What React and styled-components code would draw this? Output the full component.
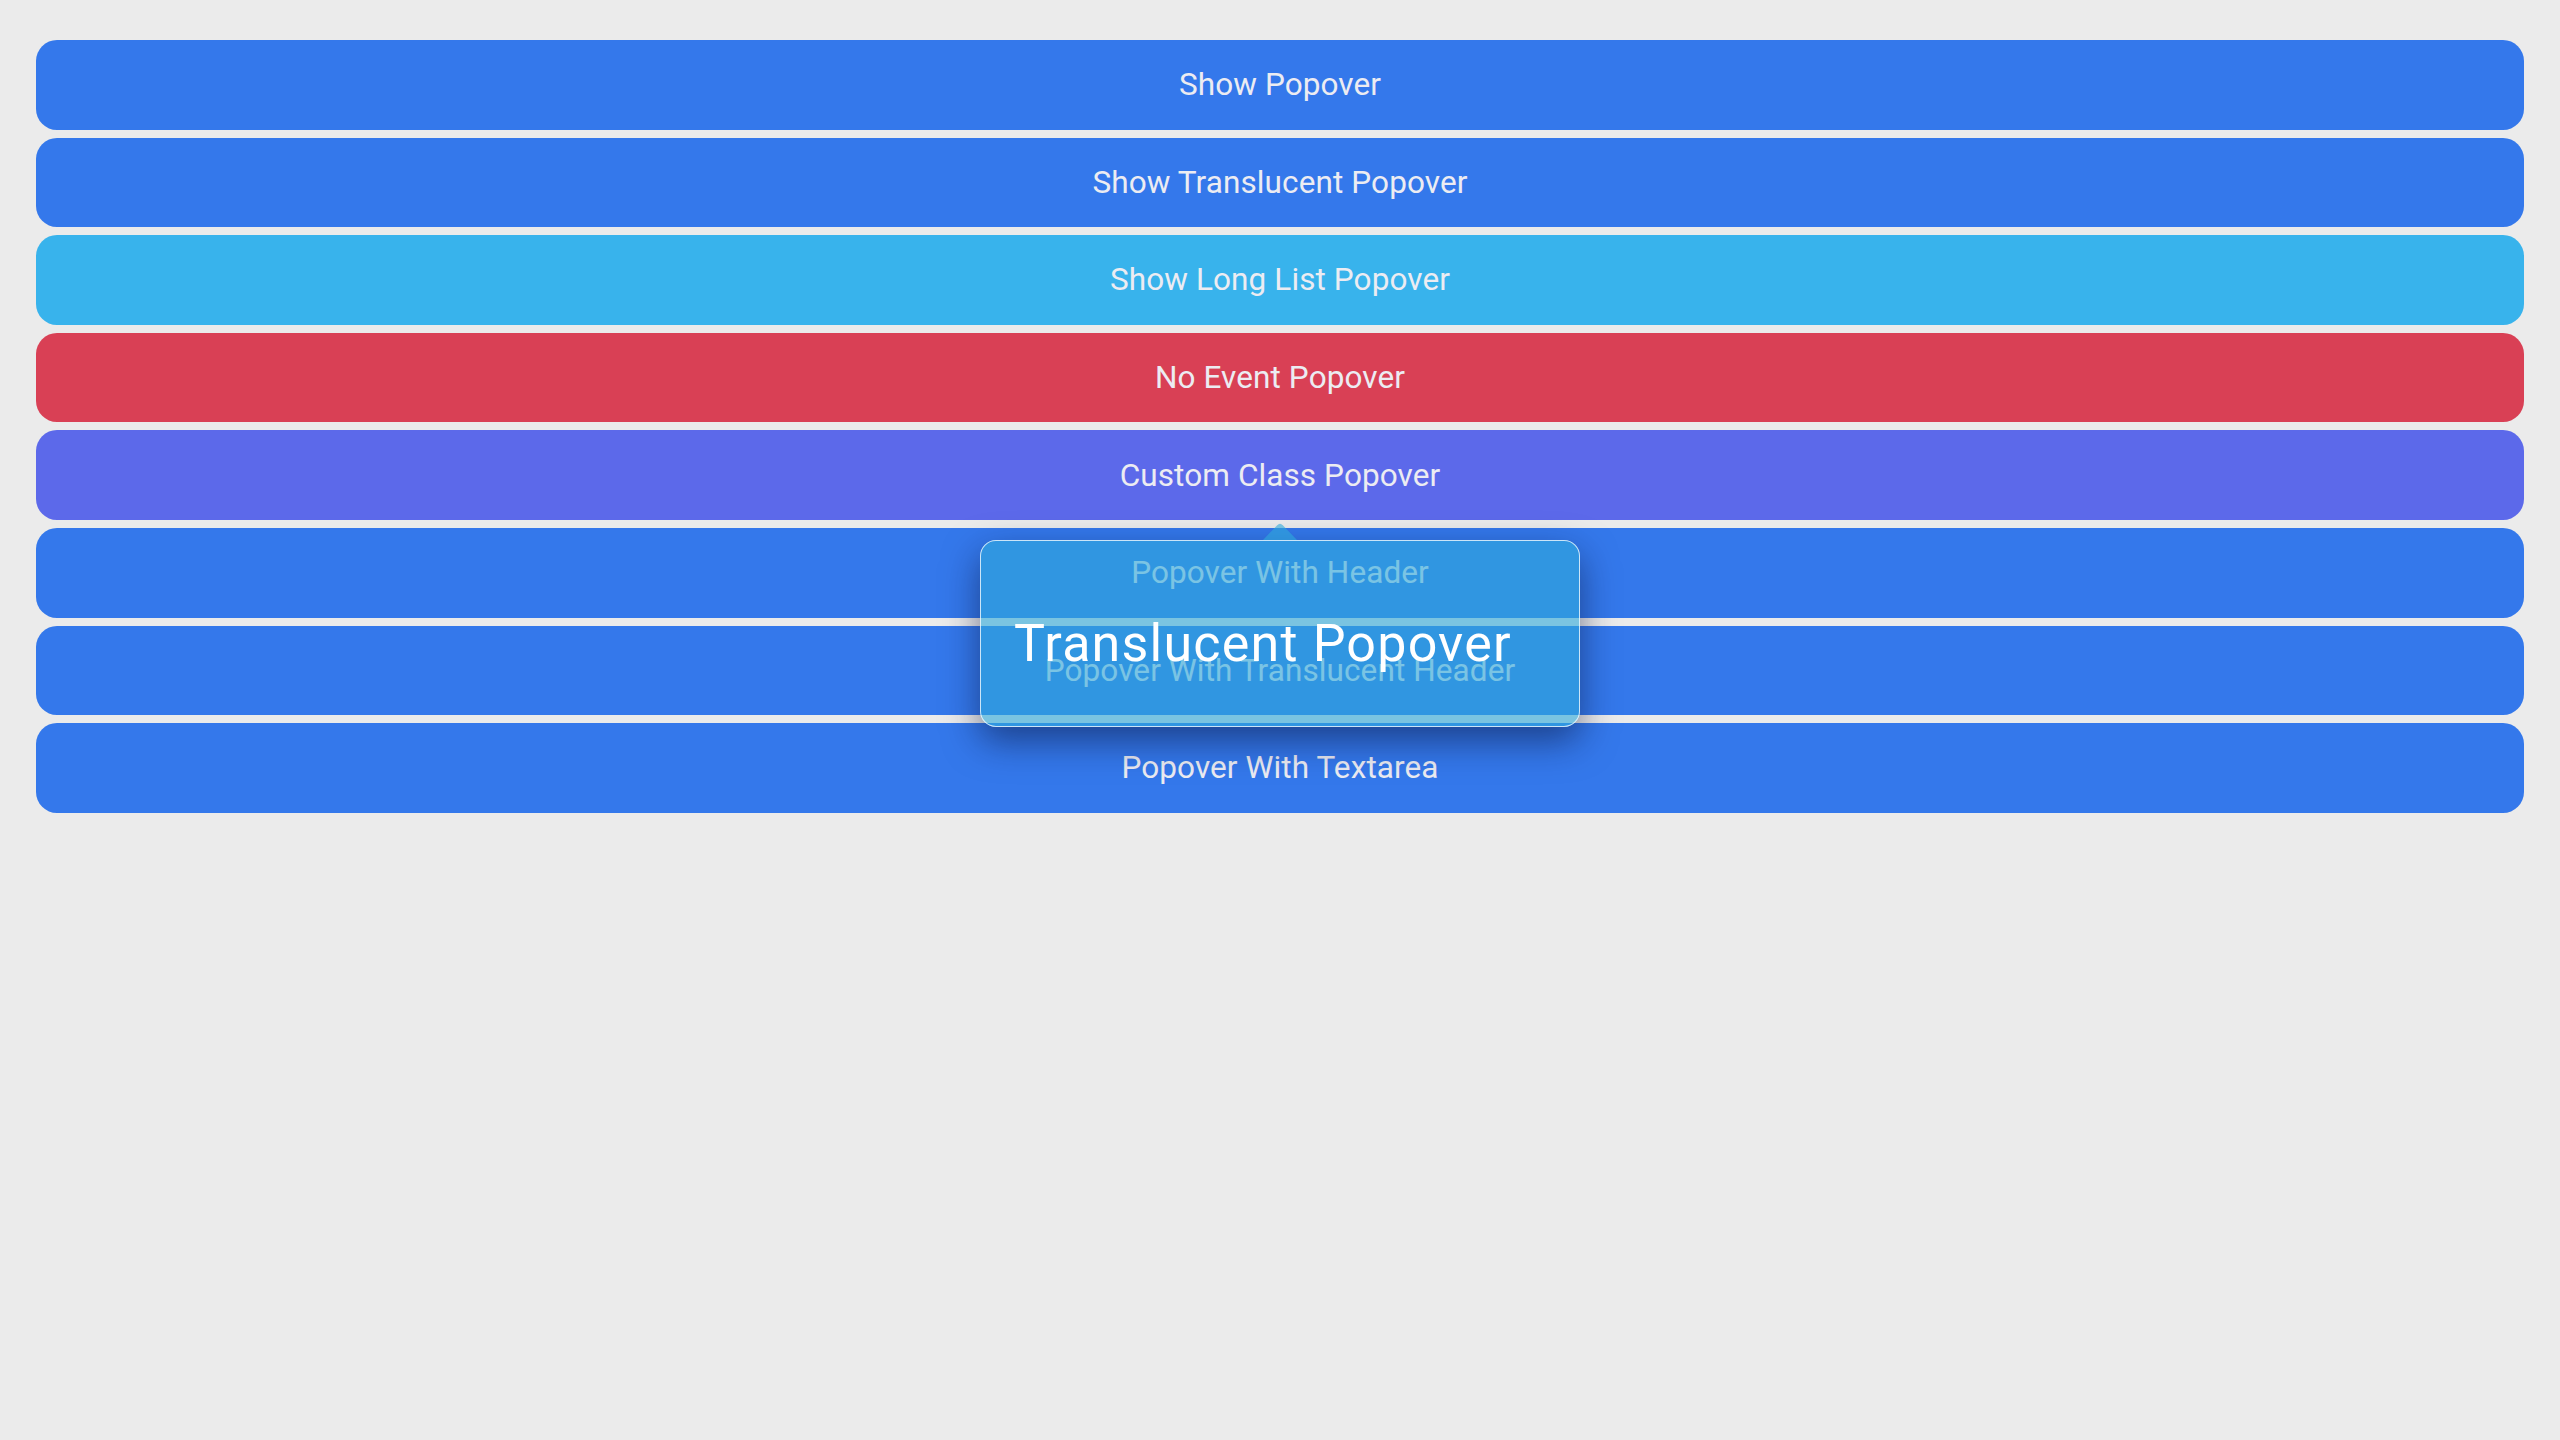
import React from 'react'
import styled, { createGlobalStyle } from 'styled-components'

const GlobalStyle = createGlobalStyle`
  html, body {
    margin: 0;
    padding: 0;
    background: #ebebeb;
    font-family: Roboto, "Liberation Sans", sans-serif;
  }
`

const colors = {
  blue: '#3478eb',
  sky: '#38b3ec',
  red: '#d94055',
  indigo: '#5c69ea',
}

const buttons = [
  { label: 'Show Popover', color: 'blue' },
  { label: 'Show Translucent Popover', color: 'blue' },
  { label: 'Show Long List Popover', color: 'sky' },
  { label: 'No Event Popover', color: 'red' },
  { label: 'Custom Class Popover', color: 'indigo' },
  { label: 'Popover With Header', color: 'blue' },
  { label: 'Popover With Translucent Header', color: 'blue' },
  { label: 'Popover With Textarea', color: 'blue' },
]

export default function App() {
  return (
    <>
      <GlobalStyle />
      <Page>
        <List>
          {buttons.map((b) => (
            <Button key={b.label} $color={colors[b.color]}>
              {b.label}
            </Button>
          ))}
        </List>

        <Popover>
          <Arrow width="34" height="18" viewBox="0 0 34 18">
            <path d="M0 18 L14.2 3.2 Q17 0.2 19.8 3.2 L34 18 Z" fill="rgba(47,170,218,0.6)" />
          </Arrow>
          <PopoverText>Translucent Popover</PopoverText>
        </Popover>
      </Page>
    </>
  )
}

const Page = styled.div`
  position: relative;
  padding: 40px 36px;
  min-height: 1440px;
  box-sizing: border-box;
`

const List = styled.div`
  display: flex;
  flex-direction: column;
  gap: 8px;
`

const Button = styled.div`
  height: 89.6px;
  display: flex;
  align-items: center;
  justify-content: center;
  border-radius: 21px;
  background: ${(p) => p.$color};
  color: #ececf2;
  font-size: 31.5px;
  letter-spacing: 0.1px;
`

const Popover = styled.div`
  position: absolute;
  top: 540px;
  left: 50%;
  transform: translateX(-50%);
  width: 600px;
  height: 187px;
  box-sizing: border-box;
  padding: 0 34px;
  border-radius: 16px;
  background: rgba(47, 170, 218, 0.6);
  box-shadow: inset 0 0 0 1px rgba(255, 255, 255, 0.75), 0 14px 36px rgba(10, 20, 60, 0.55);
`

const Arrow = styled.svg`
  position: absolute;
  top: -18px;
  left: 50%;
  transform: translateX(-50%);
  display: block;
`

const PopoverText = styled.p`
  margin: 0;
  padding-top: 74px;
  font-size: 52px;
  line-height: 60px;
  letter-spacing: 1.2px;
  color: #ffffff;
  white-space: nowrap;
`
